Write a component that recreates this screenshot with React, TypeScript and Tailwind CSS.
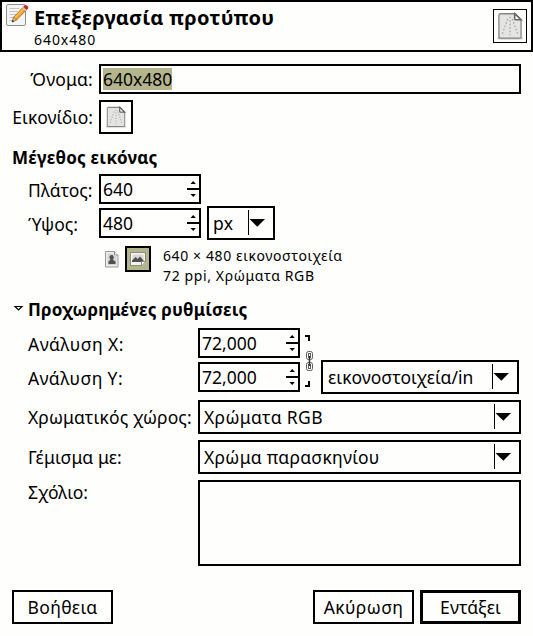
import React from "react";

const fieldBox = "box-border border-2 border-black bg-[#fefefc]";

function Label({ children, className = "" }: { children: React.ReactNode; className?: string }) {
  return <span className={`block whitespace-nowrap text-[17.5px] leading-6 ${className}`}>{children}</span>;
}

function PageIcon({ size }: { size: number }) {
  return (
    <svg width={size} height={size} viewBox="0 0 24 24" className="block">
      <rect x="1" y="21.5" width="22" height="2" rx="1" fill="#c6c6c4" />
      <path d="M3.800 1.500h12.700l5 5V21a1.300 1.300 0 0 1-1.300 1.300H3.800A1.300 1.300 0 0 1 2.500 21V2.800A1.300 1.300 0 0 1 3.800 1.500z" fill="#e4e4e2" stroke="#858583" strokeWidth="1.100" />
      <path d="M16 1.500v4.200a1 1 0 0 0 1 1h4.500z" fill="#fafafa" stroke="#666664" strokeWidth="1.300" />
      <g fill="none" stroke="#a5a5a3" strokeWidth="1.100" strokeDasharray="1.300 1.700">
        <path d="M12 4v16M10 6L5 20M14 6l5 14" />
      </g>
    </svg>
  );
}

function EditIcon() {
  return (
    <svg width="24" height="24" viewBox="0 0 24 24" className="block">
      <rect x="1.500" y="1.500" width="19" height="21" rx="1.500" fill="#f4f4f2" stroke="#90908e" />
      <path d="M4.500 5.500h10M4.500 8.500h8M4.500 11.500h8M4.500 14.500h4M4.500 17.500h3" stroke="#c3c3c1" />
      <path d="M7.500 18.500l1.200-4.300L18 4.400l3 2.800-9.500 9.800z" fill="#f5a62b" stroke="#a55a12" strokeWidth=".8" />
      <path d="M9.500 15L19 5.200" stroke="#ffd47a" strokeWidth="1" />
      <path d="M17.400 5l1.300-1.300 3 2.900-1.300 1.300z" fill="#c9c9c7" />
      <path d="M18.600 3.800l.9-1c1.500-1.200 4.300 1 3.200 2.800l-1 1.100z" fill="#dc2020" stroke="#a81616" strokeWidth=".6" />
      <path d="M7 19l1.700-4.700 2.800 2.600z" fill="#e9c79c" stroke="#644725" strokeWidth=".5" />
      <path d="M6.800 19.200l.9-2.300 1.500 1.400z" fill="#1b1b1b" />
    </svg>
  );
}

function Spin({ value }: { value: string }) {
  return (
    <div className={`flex h-[30px] w-[102px] justify-between pl-[2px] ${fieldBox}`}>
      <Label className="pt-px">{value}</Label>
      <svg width="12" height="26" viewBox="0 0 12 26" className="block">
        <path d="M0 13h12" stroke="#000" strokeWidth="2" />
        <path d="M3.500 8h5.400L6.200 5zM3.500 18h5.400L6.200 21z" fill="#000" />
      </svg>
    </div>
  );
}

function Combo({ value, className, text = "" }: { value: string; className: string; text?: string }) {
  return (
    <div className={`flex h-[34px] justify-between pl-1 ${fieldBox} ${className}`}>
      <Label className={`pt-[3px] ${text}`}>{value}</Label>
      <svg width="25" height="30" viewBox="0 0 25 30" className="block">
        <path d="M.5 2v25" stroke="#000" />
        <path d="M1.500 11h15.500L9.300 18.800z" fill="#000" />
      </svg>
    </div>
  );
}

function Button({ children, className = "border-2" }: { children: React.ReactNode; className?: string }) {
  return (
    <button className={`flex h-[34px] w-[101px] items-center justify-center border-black text-[17.5px] leading-6 ${className}`}>
      {children}
    </button>
  );
}

export default function App() {
  return (
    <main className="h-[636px] w-[533px] overflow-hidden bg-[#fefefc] font-['Noto_Sans','Open_Sans',sans-serif] text-black">
      <header className="flex h-[52px] border-2 border-black pl-[3px]">
        <div className="pt-px"><EditIcon /></div>
        <div className="pl-[5px]">
          <h1 className="h-7 whitespace-nowrap text-[20px] leading-[31px] font-bold tracking-[0.28px]">Επεξεργασία προτύπου</h1>
          <p className="text-[14px] leading-5 tracking-[0.95px]">640x480</p>
        </div>
        <div className="mt-[7px] mr-1 ml-auto flex h-[34px] w-[34px] items-center justify-center border border-black">
          <PageIcon size={28} />
        </div>
      </header>

      <section className="grid grid-cols-[93px_1fr] gap-x-1.5 gap-y-1.5 pt-3 pr-3">
        <Label className="pt-[3px] text-right tracking-[0.2px]">Όνομα:</Label>
        <div className={`h-[30px] pt-[2px] pl-[2px] ${fieldBox}`}>
          <Label className="h-[22px] w-[69px] bg-[#b5b58d] leading-[22px]">640x480</Label>
        </div>
        <Label className="pt-[5px] text-right">Εικονίδιο:</Label>
        <div className={`flex h-[34px] w-[34px] items-center justify-center ${fieldBox}`}><PageIcon size={22} /></div>
      </section>

      <section className="pl-3">
        <h2 className="h-10 pt-3 text-[17px] leading-6 font-bold tracking-[0.2px]">Μέγεθος εικόνας</h2>
        <div className="flex h-[30px]">
          <Label className="w-[87px] pt-1 pl-4">Πλάτος:</Label>
          <Spin value="640" />
        </div>
        <div className="mt-0.5 flex h-[34px] items-center">
          <Label className="w-[87px] pt-0.5 pl-4">Ύψος:</Label>
          <Spin value="480" />
          <Combo value="px" className="ml-1.5 w-[68px]" text="tracking-[0.3px]" />
        </div>
        <div className="flex h-[46px] pt-1.5 pl-[93px]">
          <svg width="14" height="17" viewBox="0 0 14 17" className="mt-[5px] block">
            <path d="M.5.5h9l3.500 3.500v12H.5z" fill="#eee" stroke="#9b9b99" />
            <path d="M9.500.5V4H13" fill="#fff" stroke="#888" />
            <path d="M2.500 2.500h6v2h3v9.500h-9z" fill="#d4d4d2" />
            <path d="M6.500 4a2.300 2.300 0 0 1 1.600 4v1l2.400 1.500V13h-7v-2.500L5.200 9V8a2.300 2.300 0 0 1 1.300-4z" fill="#50504e" />
          </svg>
          <div className="ml-1.5 flex h-[26px] w-[26px] items-center justify-center border-2 border-black bg-[#b5b58d]">
            <svg width="16" height="14" viewBox="0 0 16 14" className="block">
              <path d="M.5.5h15v9L11.500 13.500H.5z" fill="#f4f4f2" stroke="#8b8b83" />
              <path d="M2.500 2.500h11v7h-11z" fill="#d8d8d5" />
              <path d="M2 10V8.500L5.500 5l2.200 2L10 4.500l3.500 4V10z" fill="#50504e" />
              <path d="M11.500 13.500v-4h4" fill="#fff" stroke="#888" />
            </svg>
          </div>
          <div className="ml-3 whitespace-nowrap text-[14px] leading-5">
            <p className="tracking-[0.6px]">640 × 480 εικονοστοιχεία</p>
            <p className="tracking-[0.62px]">72 ppi, Χρώματα RGB</p>
          </div>
        </div>
        <h2 className="flex h-[42px] pt-3 text-[17px] leading-6 font-bold tracking-[0.2px]">
          <svg width="16" height="24" viewBox="0 0 16 24" className="block"><path d="M3 8.500h7L6.500 12z" fill="#fff" stroke="#000" strokeWidth="1.200" /></svg>
          Προχωρημένες ρυθμίσεις
        </h2>
      </section>

      <section className="pr-3 pl-7">
        <div className="flex h-[66px]">
          <div className="w-[170px]">
            <Label className="h-[34px] pt-1 tracking-[0.45px]">Ανάλυση X:</Label>
            <Label className="pt-1 tracking-[0.4px]">Ανάλυση Y:</Label>
          </div>
          <div className="flex flex-col gap-1">
            <Spin value="72,000" />
            <Spin value="72,000" />
          </div>
          <svg width="21" height="64" viewBox="0 0 21 64" className="block">
            <path d="M5 8h4v5M5 58h4v-5" fill="none" stroke="#000" strokeWidth="2" />
            <g fill="none" stroke="#5c5c5a" strokeWidth="1">
              <rect x="6.500" y="23.500" width="6" height="8" rx="2" /><rect x="8.500" y="25.500" width="2" height="4" />
              <rect x="6.500" y="34.500" width="6" height="8" rx="2" /><rect x="8.500" y="36.500" width="2" height="4" />
            </g>
            <path d="M9.500 28v10" stroke="#333" strokeWidth="1.500" />
          </svg>
          <div className="pt-8"><Combo value="εικονοστοιχεία/in" className="w-[198px]" text="pl-px tracking-[0.05px]" /></div>
        </div>
        <div className="mt-1.5 grid grid-cols-[170px_1fr] gap-y-1.5">
          <Label className="pt-[5px] tracking-[0.12px]">Χρωματικός χώρος:</Label>
          <Combo value="Χρώματα RGB" className="w-full" text="tracking-[0.36px]" />
          <Label className="pt-[5px] tracking-[0.1px]">Γέμισμα με:</Label>
          <Combo value="Χρώμα παρασκηνίου" className="w-full" text="tracking-[0.3px]" />
          <Label>Σχόλιο:</Label>
          <div className={`h-[86px] ${fieldBox}`} />
        </div>
      </section>

      <footer className="flex gap-1.5 px-3 pt-6">
        <Button className="border-2 tracking-[0.4px]">Βοήθεια</Button>
        <div className="flex-1" />
        <Button className="border-2 tracking-[0.4px]">Ακύρωση</Button>
        <Button className="border-[3px] tracking-[0.1px]">Εντάξει</Button>
      </footer>
    </main>
  );
}
